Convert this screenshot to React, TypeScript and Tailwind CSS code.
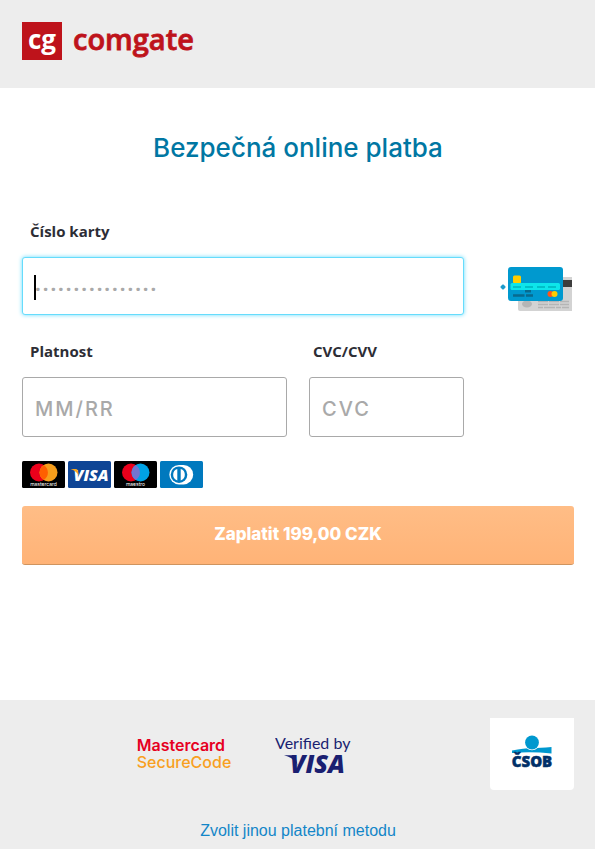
import type { ReactNode } from 'react';

function ComgateLogo() {
  return (
    <svg width="180" height="54" viewBox="0 -6 180 54" role="img" aria-label="comgate">
      <rect width="40" height="38" fill="#be131b" />
      <g fontFamily="'Open Sans', sans-serif">
        <text x="6" y="27" fontSize="26" fontWeight="700" fill="#fff">cg</text>
        <text x="51" y="28" fontSize="29" fontWeight="600" fill="#be131b" stroke="#be131b" strokeWidth="0.8">comgate</text>
      </g>
    </svg>
  );
}

function CardsIllustration() {
  return (
    <svg width="72" height="45" viewBox="-1 -1 72 45" aria-hidden="true">
      <rect x="17" y="10" width="60" height="34" rx="2" fill="#d3d3d3" />
      <rect x="52" y="13" width="20" height="7" fill="#3d3d3d" />
      <ellipse cx="26" cy="37" rx="5" ry="3.5" fill="#b5b5b5" />
      <g stroke="#b5b5b5" strokeWidth="1.5">
        <path d="M37 34.5h31M37 37.5h31" strokeDasharray="10 1" />
        <path d="M37 40.5h31" strokeDasharray="5 1 11 1" />
      </g>
      <rect x="7" width="55" height="34" rx="3" fill="#0099cf" />
      <rect x="12" y="8.500" width="8" height="8" rx="1.500" fill="#fc0" />
      <rect x="9.500" y="16" width="49.500" height="7" rx="1.500" fill="#0de5ea" />
      <path d="M12 20h8M24 20h8M36 20h8M47 20h8" stroke="#00c0c8" strokeWidth="2" />
      <path d="M12 28.500h11.500M25 28.500h7M24 24.200h6" stroke="#086a8f" strokeWidth="2.500" />
      <circle cx="49.500" cy="27" r="3" fill="#ff5419" />
      <circle cx="53.500" cy="27" r="3" fill="#fc0" />
      <path d="M2 17.500v5M-0.500 20h5M0.500 18.500l3 3M3.500 18.500l-3 3" stroke="#1b9acb" strokeWidth="1.500" />
    </svg>
  );
}

function CirclesBadge({ name, right, overlap }: { name: string; right: string; overlap: string }) {
  return (
    <svg width="43" height="27" viewBox="0 0 43 27" role="img" aria-label={name}>
      <rect width="43" height="27" rx="1.500" fill="#000" />
      <circle cx="17" cy="11.500" r="9" fill="#eb001b" />
      <circle cx="26.500" cy="11.500" r="9" fill={right} />
      <path d="M21.750 3.900a9 9 0 0 1 0 15.200a9 9 0 0 1 0-15.200z" fill={overlap} />
      <text x="21.500" y="24.500" fontSize="5" textAnchor="middle" fill="#fff" fontFamily="Inter, sans-serif">{name}</text>
    </svg>
  );
}

function VisaBadge() {
  return (
    <svg width="43" height="27" viewBox="0 0 43 27" role="img" aria-label="VISA">
      <rect width="43" height="27" rx="1.500" fill="#0f4595" />
      <text x="5.500" y="19.500" fontSize="16" fontWeight="800" fontStyle="italic" fill="#fff" fontFamily="'Open Sans', sans-serif">VISA</text>
      <path d="M2.500 8h5.500q1.500 0 1.800 1.500l1 5Q8 9.500 2.500 8z" fill="#f7a823" />
    </svg>
  );
}

function DinersBadge() {
  return (
    <svg width="43" height="27" viewBox="0 0 43 27" role="img" aria-label="Diners Club">
      <rect width="43" height="27" rx="1.500" fill="#0079be" />
      <path d="M19 4h4.500a9.700 9.700 0 0 1 0 19.400H19A9.700 9.700 0 0 1 19 4z" fill="#fff" />
      <circle cx="19" cy="13.700" r="8.300" fill="#0079be" />
      <path d="M17.300 8v11.400a6 6 0 0 1 0-11.400zM20.700 8v11.400a6 6 0 0 0 0-11.400z" fill="#fff" />
    </svg>
  );
}

function CsobLogo() {
  return (
    <svg width="44" height="40" viewBox="0 0 44 40" role="img" aria-label="ČSOB">
      <path d="M2 16.500Q14 14 22 14T41.500 13v6.500Q22 17.500 2 19z" fill="#0098cf" />
      <circle cx="22" cy="8.500" r="7.800" fill="#fff" />
      <circle cx="22" cy="8.500" r="6.900" fill="#0098cf" />
      <text x="22" y="33" fontSize="15" fontWeight="800" textAnchor="middle" fill="#013068" stroke="#013068" strokeWidth="0.5" fontFamily="'Open Sans', sans-serif">ČSOB</text>
    </svg>
  );
}

function FieldLabel({ htmlFor, className = 'pl-2', children }: { htmlFor: string; className?: string; children: ReactNode }) {
  return (
    <label htmlFor={htmlFor} className={`block pb-4 font-['Open_Sans',sans-serif] text-[15px] leading-5 font-bold text-[#2d2d35] ${className}`}>
      {children}
    </label>
  );
}

const inputClass =
  'block w-full h-[60px] rounded-[3px] border border-[#a9a9a9] bg-white px-3 pt-1 text-xl tracking-widest font-medium text-gray-800 outline-none placeholder:text-[#a9a9a9]';

export default function App() {
  return (
    <div className="flex min-h-screen flex-col bg-white font-['Inter',sans-serif]">
      <header className="h-[88px] bg-[#ededed] px-[22px] pt-4">
        <ComgateLogo />
      </header>

      <main className="pl-[22px] pr-[21px] pb-[135px]">
        <h1 className="pt-11 text-center text-[26px] leading-8 font-medium text-[#0077a3]">
          Bezpečná online platba
        </h1>

        <form className="pt-[57px]" onSubmit={(e) => e.preventDefault()}>
          <div className="grid grid-cols-[265fr_155fr_88fr] gap-x-[22px] gap-y-[26px]">
            <div className="col-span-2">
              <FieldLabel htmlFor="card">Číslo karty</FieldLabel>
              <div className="relative">
                <input
                  id="card"
                  inputMode="numeric"
                  placeholder="················"
                  className="block h-[58px] w-full rounded-[3px] border border-[#66dcfc] bg-white px-3 pt-1 text-xl tracking-widest font-['Open_Sans',sans-serif] font-bold text-gray-800 shadow-[0_0_4px_#66dcfc] outline-none placeholder:text-[#a9a9a9]"
                />
                <span className="absolute left-3 top-[18px] h-[25px] w-0.5 bg-black" />
              </div>
            </div>
            <div className="flex items-end justify-end pr-0.5 pb-1">
              <CardsIllustration />
            </div>
            <div>
              <FieldLabel htmlFor="expiry">Platnost</FieldLabel>
              <input id="expiry" placeholder="MM/RR" className={inputClass} />
            </div>
            <div>
              <FieldLabel htmlFor="cvc" className="pl-1">CVC/CVV</FieldLabel>
              <input id="cvc" placeholder="CVC" className={inputClass} />
            </div>
          </div>

          <div className="flex gap-[3px] pt-6">
            <CirclesBadge name="mastercard" right="#f79e1b" overlap="#ff5f00" />
            <VisaBadge />
            <CirclesBadge name="maestro" right="#00a2e5" overlap="#7375cf" />
            <DinersBadge />
          </div>

          <button
            type="submit"
            className="mt-[18px] h-[59px] w-full rounded-[3px] border-b border-[#cf945f] bg-linear-to-b from-[#ffbd86] to-[#ffb377] text-[17px] font-extrabold text-white"
          >
            Zaplatit 199,00 CZK
          </button>
        </form>
      </main>

      <footer className="flex-1 bg-[#ededed] pl-[22px] pr-[21px] pt-[18px]">
        <div className="grid grid-cols-[1fr_84px] gap-x-6">
          <div className="flex items-center justify-center gap-11">
            <p className="text-base leading-[17px] font-medium text-[#f8a01f]">
              <span className="font-semibold text-[#e6001f]">Mastercard</span>
              <br />
              SecureCode
            </p>
            <svg width="76" height="54" viewBox="0 -6 76 54" role="img" aria-label="Verified by VISA" fill="#1a1f71">
              <text x="0" y="16" fontSize="16" fontFamily="Lato, sans-serif">Verified by</text>
              <text x="15" y="40" fontSize="25" fontWeight="800" fontStyle="italic" fontFamily="'Open Sans', sans-serif">VISA</text>
              <path d="M9 22.200h9q2 0 2.500 2l2 8Q18 24.200 9 22.200z" />
            </svg>
          </div>
          <div className="flex h-[72px] items-center justify-center rounded-b bg-white">
            <CsobLogo />
          </div>
        </div>
        <p className="pt-[29px] pb-1.5 text-center font-['Liberation_Sans',Arial,sans-serif] text-base leading-6">
          <a href="#" className="text-[#1386c8]">Zvolit jinou platební metodu</a>
        </p>
      </footer>
    </div>
  );
}
